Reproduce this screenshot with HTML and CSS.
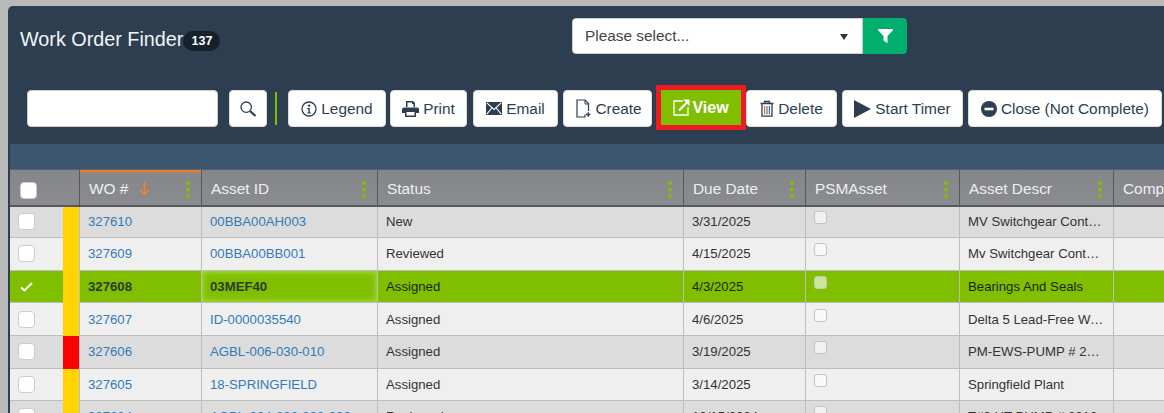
FILE: index.html
```html
<!DOCTYPE html>
<html lang="en">
<head>
<meta charset="utf-8">
<title>Work Order Finder</title>
<link rel="stylesheet" href="styles.css">
</head>
<body>
<main class="panel">
  <header class="top">
    <h1 class="title">Work Order Finder<span class="badge">137</span></h1>
    <div class="picker">
      <div class="select"><span>Please select...</span><i class="caret"></i></div>
      <button class="filter" aria-label="Filter"><svg width="17" height="16" viewBox="0 0 16 16"><path fill="#fff" d="M.5 1h15v1.200L10 8v7.200L6 12.600V8L.5 2.200z"/></svg></button>
    </div>
  </header>
  <div class="toolbar">
    <input class="search" type="text" aria-label="Search">
    <button class="btn icon-only" aria-label="Search"><svg width="18" height="18" viewBox="0 0 18 18" fill="none" stroke="#2c3e50"><circle cx="7.200" cy="7.200" r="5.200" stroke-width="1.300"/><path d="M11 11l5.500 5" stroke-width="2.200"/></svg></button>
    <span class="sep"></span>
    <button class="btn legend"><svg width="16" height="16" viewBox="0 0 16 16" fill="none"><circle cx="8" cy="8" r="7" stroke="#2c3e50" stroke-width="1.300"/><circle cx="8" cy="4.600" r="1.200" fill="#2c3e50"/><path d="M6.300 7h2.500v4.400h1.200v1.200H6.200v-1.200h1.200V8.200H6.300z" fill="#2c3e50"/></svg>Legend</button>
    <button class="btn print"><svg width="17" height="16" viewBox="0 0 17 16"><path fill="#2c3e50" d="M4 0h7l2 2v4h-1.500V3H10V1.500H5.500V6H4zM2 6.500h13a2 2 0 0 1 2 2V12h-3v4H3v-4H0V8.500a2 2 0 0 1 2-2zM4.500 11v3.500h8V11z"/></svg>Print</button>
    <button class="btn email"><svg width="16" height="13" viewBox="0 0 16 13"><rect width="16" height="13" fill="#2c3e50"/><path d="M.8 .8L8 7.500 15.200 .8M.8 12.200L5.800 6M15.200 12.200L10.200 6" fill="none" stroke="#fff" stroke-width="1.100"/></svg>Email</button>
    <button class="btn create"><svg width="15" height="19" viewBox="0 0 15 19" fill="none" stroke="#2c3e50" stroke-width="1.200"><path d="M9 15.500V18H1V1h8l3.500 3.500V12"/><path d="M9 1v4h3.500" stroke-width="1"/><path d="M10 15.500h4.500M12.300 13.300v4.500" stroke-width="1.400"/></svg>Create</button>
    <button class="btn view"><svg width="17" height="17" viewBox="0 0 17 17" fill="none" stroke="#fff"><path d="M10 2H1v14h14V8" stroke-width="1.300"/><path d="M6 11.500L14 3.500" stroke-width="2.200"/><path fill="#fff" stroke="none" d="M10 .5h6.500V7z"/></svg>View</button>
    <button class="btn delete"><svg width="14" height="17" viewBox="0 0 14 17" fill="none" stroke="#2c3e50"><path d="M.5 3.500h13M4.500 3.500V1.500h5v2" stroke-width="1.300"/><path d="M2 4v12.200h10V4" stroke-width="1.300"/><path d="M4.600 6v8.500" stroke="#c0772e" stroke-width="1.200"/><path d="M7 6v8.500" stroke="#7a6a8a" stroke-width="1.200"/><path d="M9.400 6v8.500" stroke="#3f6fb0" stroke-width="1.200"/></svg>Delete</button>
    <button class="btn timer"><svg width="17" height="18" viewBox="0 0 17 18"><path fill="#2c3e50" d="M0 0l17 9L0 18z"/></svg>Start Timer</button>
    <button class="btn closeout"><svg width="16" height="16" viewBox="0 0 16 16"><circle cx="8" cy="8" r="8" fill="#2c3e50"/><rect x="3.500" y="6.700" width="9" height="2.600" fill="#fff"/></svg>Close (Not Complete)</button>
  </div>
  <div class="band"></div>
  <section class="grid">
    <div class="row head">
      <div class="cell"><span class="box hbox"></span></div>
      <div class="cell sorted"><span>WO #</span><svg class="arrow" width="11" height="14" viewBox="0 0 11 14" fill="none" stroke="#f58220" stroke-width="1.500"><path d="M5.500 0v12.500M1 8l4.500 4.500L10 8"/></svg><i class="dots"></i></div>
      <div class="cell"><span>Asset ID</span><i class="dots"></i></div>
      <div class="cell"><span>Status</span><i class="dots"></i></div>
      <div class="cell"><span>Due Date</span><i class="dots"></i></div>
      <div class="cell"><span>PSMAsset</span><i class="dots"></i></div>
      <div class="cell"><span>Asset Descr</span><i class="dots"></i></div>
      <div class="cell"><span>Comp</span></div>
    </div>
    <div class="row dark first">
      <div class="cell sel"><span class="box"></span><i class="flag yellow"></i></div>
      <div class="cell"><a>327610</a></div><div class="cell"><a>00BBA00AH003</a></div><div class="cell">New</div><div class="cell">3/31/2025</div>
      <div class="cell"><span class="mini"></span></div><div class="cell"><span class="clip">MV Switchgear Control Panel</span></div><div class="cell"></div>
    </div>
    <div class="row light">
      <div class="cell sel"><span class="box"></span><i class="flag yellow"></i></div>
      <div class="cell"><a>327609</a></div><div class="cell"><a>00BBA00BB001</a></div><div class="cell">Reviewed</div><div class="cell">4/15/2025</div>
      <div class="cell"><span class="mini"></span></div><div class="cell"><span class="clip">Mv Switchgear Control Panel</span></div><div class="cell"></div>
    </div>
    <div class="row picked">
      <div class="cell sel"><svg class="tick" width="13" height="10" viewBox="0 0 13 10" fill="none" stroke="#fff" stroke-width="2"><path d="M1 5.500L4.500 8.500 12 1"/></svg><i class="flag yellow"></i></div>
      <div class="cell"><a>327608</a></div><div class="cell focus"><a>03MEF40</a></div><div class="cell">Assigned</div><div class="cell">4/3/2025</div>
      <div class="cell"><span class="mini"></span></div><div class="cell"><span class="clip">Bearings And Seals</span></div><div class="cell"></div>
    </div>
    <div class="row light">
      <div class="cell sel"><span class="box"></span><i class="flag yellow"></i></div>
      <div class="cell"><a>327607</a></div><div class="cell"><a>ID-0000035540</a></div><div class="cell">Assigned</div><div class="cell">4/6/2025</div>
      <div class="cell"><span class="mini"></span></div><div class="cell"><span class="clip wide">Delta 5 Lead-Free Water Heater</span></div><div class="cell"></div>
    </div>
    <div class="row dark">
      <div class="cell sel"><span class="box"></span><i class="flag red"></i></div>
      <div class="cell"><a>327606</a></div><div class="cell"><a>AGBL-006-030-010</a></div><div class="cell">Assigned</div><div class="cell">3/19/2025</div>
      <div class="cell"><span class="mini"></span></div><div class="cell"><span class="clip">PM-EWS-PUMP # 2 Monthly</span></div><div class="cell"></div>
    </div>
    <div class="row light">
      <div class="cell sel"><span class="box"></span><i class="flag yellow"></i></div>
      <div class="cell"><a>327605</a></div><div class="cell"><a>18-SPRINGFIELD</a></div><div class="cell">Assigned</div><div class="cell">3/14/2025</div>
      <div class="cell"><span class="mini"></span></div><div class="cell"><span class="clip">Springfield Plant</span></div><div class="cell"></div>
    </div>
    <div class="row dark">
      <div class="cell sel"><span class="box"></span><i class="flag yellow"></i></div>
      <div class="cell"><a>327604</a></div><div class="cell"><a>AGBL-004-030-030-030</a></div><div class="cell">Reviewed</div><div class="cell">10/15/2024</div>
      <div class="cell"><span class="mini"></span></div><div class="cell"><span class="clip">T#3 HT PUMP # 2010</span></div><div class="cell"></div>
    </div>
  </section>
</main>
</body>
</html>
```
FILE: styles.css
```css
* { box-sizing: border-box; }
html, body { margin: 0; height: 100%; overflow: hidden; }
body {
  background: #b9b9b9;
  font-family: "Liberation Sans", Arial, sans-serif;
  padding: 6px 0 0 8px;
  width: 1164px;
  height: 413px;
}
.panel {
  width: 1300px;
  height: 600px;
  background: #2c3e50;
  border-radius: 5px 0 0 0;
  padding-left: 2px;
}
.top {
  display: flex;
  height: 84px;
  padding-top: 12px;
}
.title {
  margin: 0;
  width: 562px;
  padding: 9px 0 0 10px;
  font-size: 19.800px;
  font-weight: 400;
  line-height: 24px;
  color: #f3f5f7;
}
.badge {
  display: inline-block;
  vertical-align: 1px;
  width: 37px;
  height: 20px;
  line-height: 20px;
  border-radius: 10px;
  background: #17212b;
  color: #fff;
  font-size: 12.500px;
  font-weight: 700;
  text-align: center;
}
.picker { display: flex; height: 36px; }
.select {
  width: 291px;
  background: #fff;
  border: 1px solid #ccc;
  border-radius: 4px 0 0 4px;
  padding: 0 14px 0 12px;
  display: flex;
  align-items: center;
  justify-content: space-between;
  color: #444;
  font-size: 15.400px;
}
.caret {
  width: 0; height: 0;
  border-left: 4px solid transparent;
  border-right: 4px solid transparent;
  border-top: 6px solid #333;
  margin-top: 2px;
}
.filter {
  width: 44px;
  border: 0;
  padding: 0;
  background: #00ae6e;
  border-radius: 0 4px 4px 0;
  display: flex;
  align-items: center;
  justify-content: center;
}
.toolbar {
  display: flex;
  align-items: flex-start;
  height: 54px;
  padding-left: 17px;
}
.search {
  width: 191px;
  height: 37px;
  border: 1px solid #ccc;
  border-radius: 4px;
  background: #fff;
  margin-right: 11px;
}
.btn {
  height: 37px;
  flex: none;
  border: 1px solid #ddd;
  border-radius: 4px;
  background: #fff;
  color: #2c3e50;
  font: 400 15.400px "Liberation Sans", Arial, sans-serif;
  display: flex;
  align-items: center;
  justify-content: center;
  gap: 4px;
  padding: 0;
}
.icon-only { width: 38px; }
.sep { width: 2px; height: 33px; background: #7fbf00; margin: 2px 11px 0 8px; }
.legend { width: 98px; }
.print { width: 77px; margin-left: 4px; }
.email { width: 85px; margin-left: 6px; }
.create { width: 89px; margin-left: 5px; padding-left: 3px; }
.view {
  width: 80px;
  height: 35px;
  margin: 0 5px 0 9px;
  background: #7fbf00;
  border: 0;
  border-radius: 0;
  color: #fff;
  font-size: 16px;
  font-weight: 700;
  outline: 5px solid #ed1c24;
  gap: 2px;
}
.delete { width: 91px; }
.timer { width: 121px; margin-left: 5px; }
.closeout { width: 194px; margin-left: 5px; }
.band { height: 25px; background: #3c5670; }
.grid { width: 1300px; background: #efefef; }
.row {
  display: grid;
  grid-template-columns: 70px 122px 176px 306px 122px 154px 154px 196px;
  height: 32.600px;
  font-size: 13.200px;
  color: #333;
}
.row.first { height: 31.200px; }
.first .cell { padding-bottom: 2px; }
.cell {
  position: relative;
  display: flex;
  align-items: center;
  padding: 0 8px;
  border-right: 1px solid #bdbdbd;
  border-bottom: 1px solid #bdbdbd;
  min-width: 0;
}
.dark { background: #dcdcdc; }
.light { background: #efefef; }
.picked { background: #7fbf00; color: #1c2600; }
.picked a { color: #2d3a26; font-weight: 700; }
a { color: #337ab7; }
.head {
  height: 38px;
  background: linear-gradient(#85868a, #8b8c90);
  color: #eceff2;
  font-size: 15.400px;
}
.head .cell {
  padding: 3px 8px 0 9px;
  border-top: 1px solid #5d6068;
  border-right: 1px solid #55585f;
  border-bottom: 2px solid #55585f;
}
.sorted { box-shadow: inset 0 3px 2px -1px #f58220; }
.arrow { margin-left: 11px; }
.dots {
  position: absolute;
  right: 11px;
  top: 11px;
  width: 4px;
  height: 4px;
  border-radius: 50%;
  background: #7fbf00;
  box-shadow: 0 6.500px 0 #7fbf00, 0 13px 0 #7fbf00;
}
.box {
  display: block;
  width: 17px;
  height: 17px;
  background: #fff;
  border: 1px solid #ccc;
  border-radius: 4px;
}
.hbox { margin-left: 1px; margin-top: 2px; }
.sel { padding: 0 0 0 8px; }
.tick { margin-left: 2px; }
.flag { position: absolute; right: 0; top: 0; bottom: -1px; width: 16px; }
.yellow { background: #ffd400; }
.red { background: #ff0000; }
.mini {
  display: block;
  width: 13px;
  height: 13px;
  margin-bottom: 8px;
  border: 1px solid #c4c4c4;
  border-radius: 3px;
  background: rgba(255, 255, 255, .6);
}
.clip {
  display: block;
  overflow: hidden;
  white-space: nowrap;
  text-overflow: ellipsis;
  padding-right: 2px;
}
.clip.wide { padding-right: 0; }
.focus { box-shadow: inset 0 0 6px 1px #a5e03c; }
```
